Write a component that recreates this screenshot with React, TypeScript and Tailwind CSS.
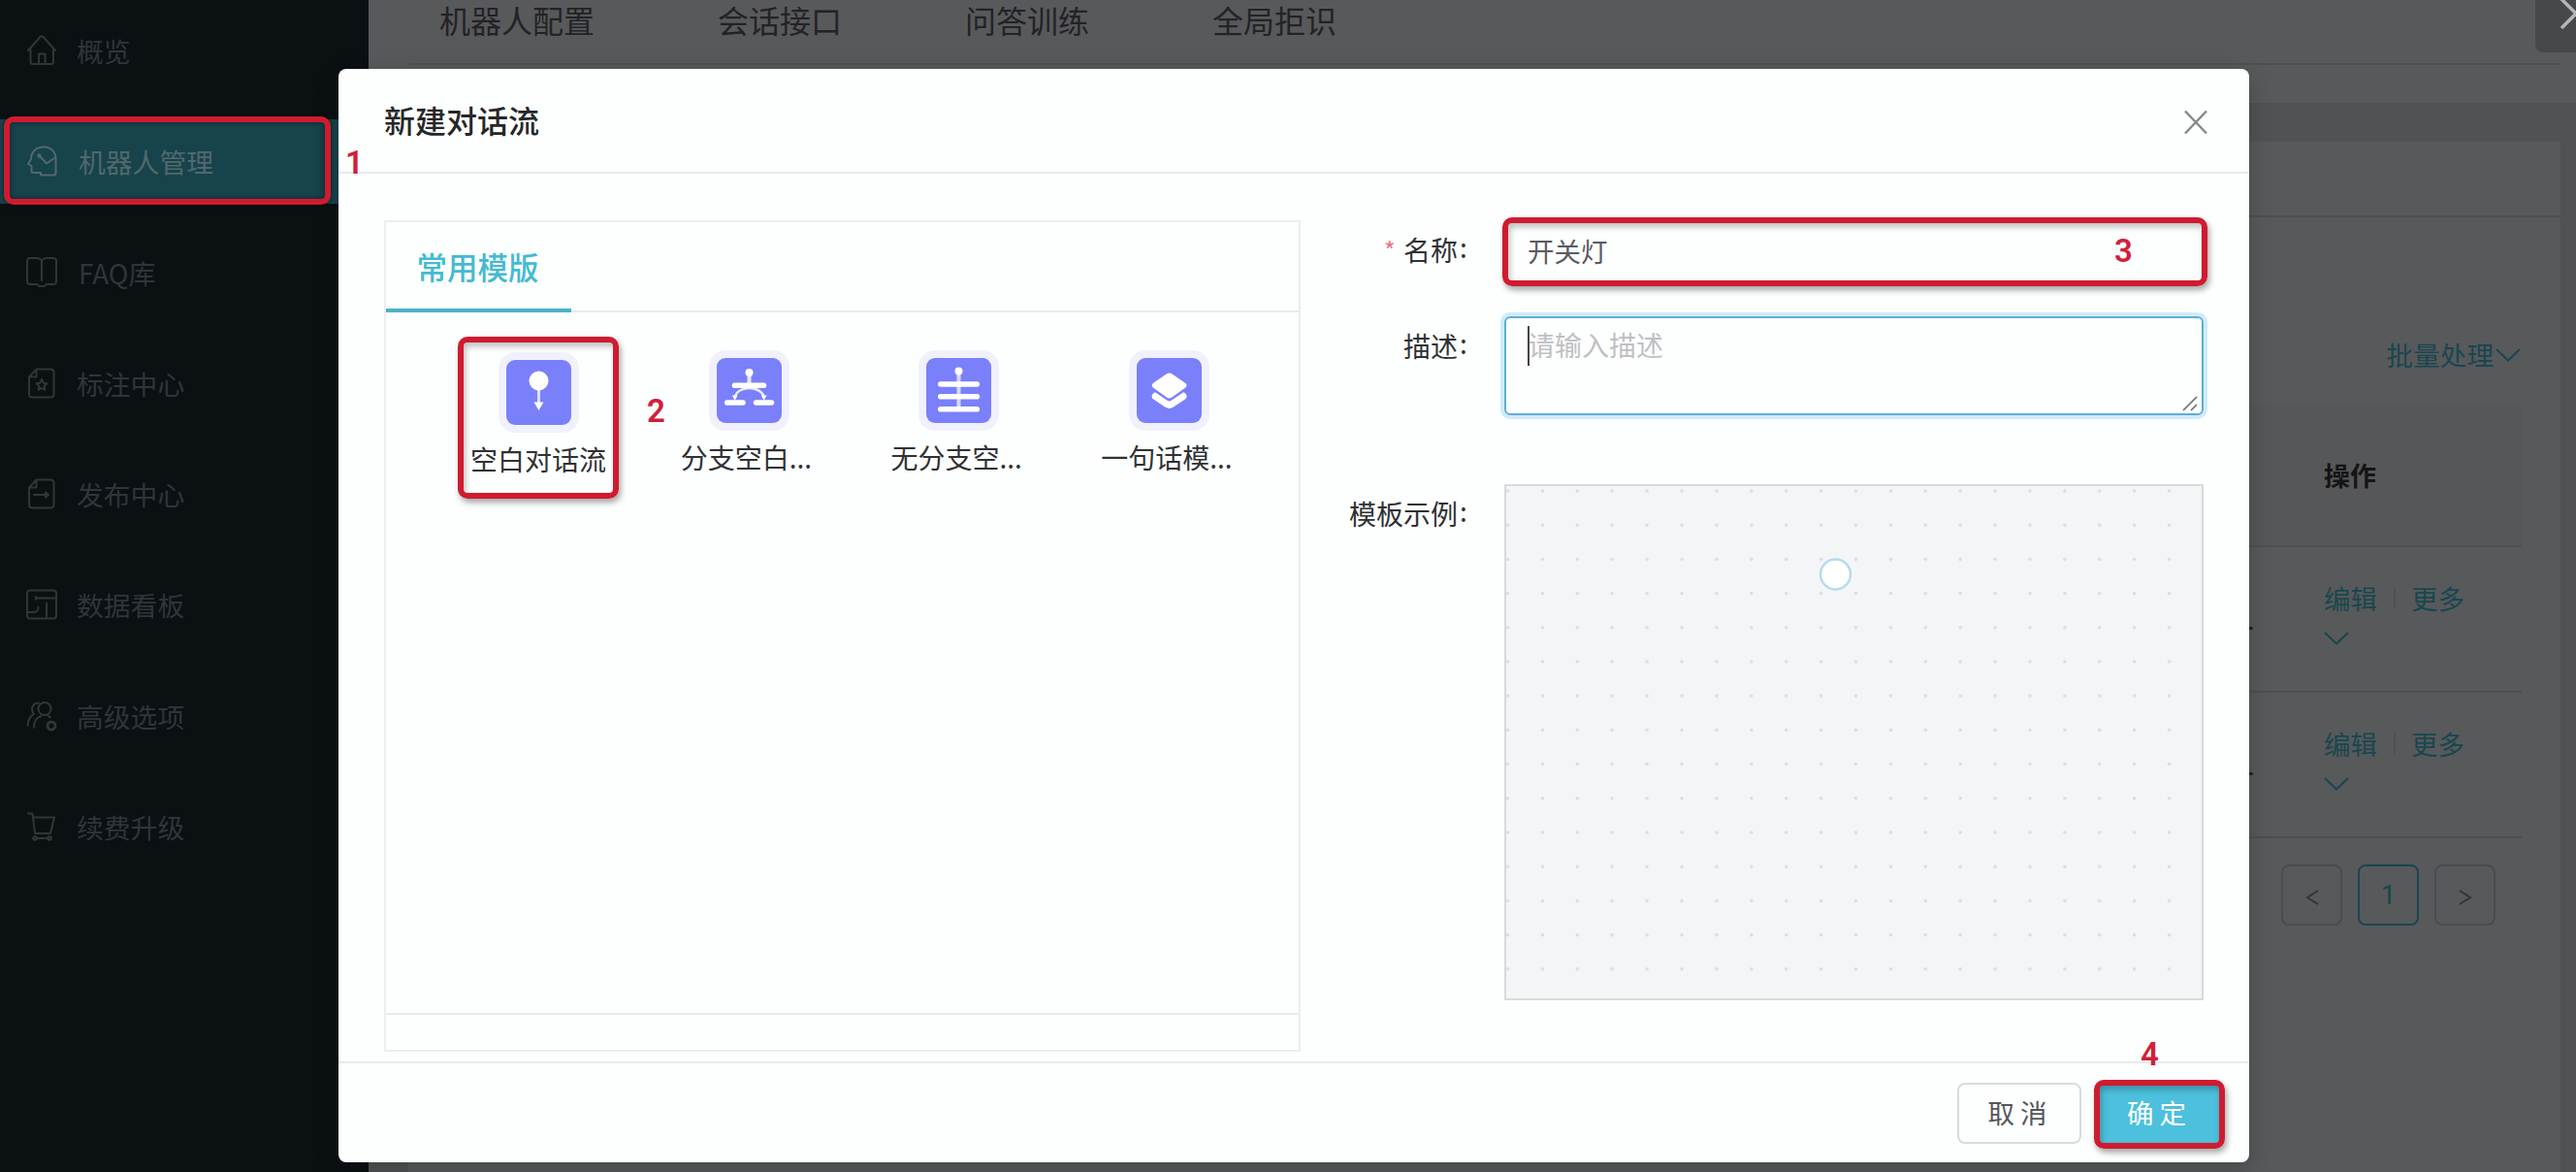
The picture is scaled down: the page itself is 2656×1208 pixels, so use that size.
import React from 'react';

interface NavItemProps {
  label: string;
  icon: React.ReactNode;
  active?: boolean;
  iconWidth?: string;
}

const navItems: NavItemProps[] = [
  {
    label: '概览',
    icon: (
      <>
        <path d="M2 16 L14.5 2 Q16 0.8 17.5 2 L30 16 M4.5 14 V28 Q4.5 30 6.5 30 H26 Q28 30 28 28 V14" />
        <path d="M13 29 V19.5 H19.5 V29" />
      </>
    ),
  },
  {
    label: '机器人管理',
    active: true,
    iconWidth: 'w-[34px]',
    icon: (
      <>
        <path d="M18 1.5 C10 1.5 5 7 5 14 L2 19 L5.5 21 V26.5 Q5.5 28 7.5 28 H15 V30.5 H28 Q30.5 30.5 30.5 28 V14 C30.5 7 26 1.5 18 1.5 Z" />
        <path d="M14 11 L21 18.5 L29 13" />
        <circle cx="13.5" cy="10.5" r="1.2" />
      </>
    ),
  },
  {
    label: 'FAQ库',
    iconWidth: 'w-[34px]',
    icon: (
      <>
        <path d="M16 3.5 Q14 1 11 1 H4 Q1 1 1 4 V25 Q1 28 4 28 H11 L13.5 30 H18.5 L21 28 H28 Q31 28 31 25 V4 Q31 1 28 1 H21 Q18 1 16 3.5 Z" />
        <path d="M16 4 V24" />
      </>
    ),
  },
  {
    label: '标注中心',
    icon: (
      <>
        <path d="M10.5 1.5 H25 Q28.5 1.5 28.5 5 V27 Q28.5 30.5 25 30.5 H6.5 Q3 30.5 3 27 V9.5 Z M10.5 2 V9.5 H3.5" />
        <path d="M16 12 L17.7 15.7 L21.5 16.2 L18.7 18.9 L19.4 22.8 L16 20.9 L12.6 22.8 L13.3 18.9 L10.5 16.2 L14.3 15.7 Z" />
      </>
    ),
  },
  {
    label: '发布中心',
    icon: (
      <>
        <path d="M10.5 1.5 H25 Q28.5 1.5 28.5 5 V27 Q28.5 30.5 25 30.5 H6.5 Q3 30.5 3 27 V9.5 Z M10.5 2 V9.5 H3.5" />
        <path d="M8 17 H22" />
        <path d="M20 14.5 L23 17 L20 19.5 Z" />
      </>
    ),
  },
  {
    label: '数据看板',
    icon: (
      <>
        <rect x="1" y="1.5" width="30" height="29" rx="3" />
        <path d="M31 9.5 H11.5 M10 8 V11 M1.5 24 H8 Q12.5 24 12.5 18.5 M21 30 V14.5" />
      </>
    ),
  },
  {
    label: '高级选项',
    icon: (
      <>
        <circle cx="19" cy="8.5" r="6.5" />
        <path d="M13 2.5 Q6.5 2.5 6 9 Q6 12 8 14 Q2 17 1.5 26 M8 28 Q8 18 15.5 16 M22.5 15.5 L25 17.5" />
        <circle cx="26" cy="26" r="4" strokeWidth="3" />
      </>
    ),
  },
  {
    label: '续费升级',
    icon: (
      <>
        <path d="M2 2.5 H6.5 L9 23 H25 L29 6.5 H8" />
        <circle cx="9" cy="28" r="1.8" />
        <circle cx="24" cy="28" r="1.8" />
        <path d="M10 28 H23" />
      </>
    ),
  },
];

const tabs = ['机器人配置', '会话接口', '问答训练', '全局拒识'];

const templates: { label: string; selected?: boolean; icon: React.ReactNode }[] = [
  {
    label: '空白对话流',
    selected: true,
    icon: (
      <>
        <circle cx="33.5" cy="21.5" r="10" fill="white" />
        <path d="M33.5 30 V46" stroke="white" strokeOpacity="0.75" strokeWidth="3" />
        <path d="M28.5 43.5 H38.5 L33.5 52 Z" fill="white" />
      </>
    ),
  },
  {
    label: '分支空白...',
    icon: (
      <>
        <circle cx="33.5" cy="15" r="4" fill="white" />
        <path d="M33.5 18 V27" stroke="white" strokeOpacity="0.8" strokeWidth="4" />
        <path d="M18.5 28.3 H48.5 M10.7 46 H27 M40.5 46 H56.5" stroke="white" strokeWidth="5.6" strokeLinecap="round" />
        <path d="M18.7 42 C18.7 35 26 31 33.5 31 C41 31 48.7 35 48.7 42" fill="none" stroke="white" strokeOpacity="0.85" strokeWidth="2.4" />
        <path d="M15.8 38.5 H21.6 L18.7 43.5 Z M45.8 38.5 H51.6 L48.7 43.5 Z" fill="white" />
      </>
    ),
  },
  {
    label: '无分支空...',
    icon: (
      <>
        <circle cx="33.5" cy="13.5" r="4" fill="white" />
        <path d="M33.5 17 V51" stroke="white" strokeOpacity="0.7" strokeWidth="4" />
        <path d="M14.8 27 H52.3 M14.8 39.8 H52.3 M14.8 52.7 H52.3" stroke="white" strokeWidth="5.6" strokeLinecap="round" />
      </>
    ),
  },
  {
    label: '一句话模...',
    icon: (
      <>
        <path d="M31 16.3 Q33.6 14.8 36.2 16.3 L50 25.8 Q53 28.3 50 30.8 L36 40.8 Q33.6 42.3 31.2 40.8 L17.2 30.8 Q14.2 28.3 17.2 25.8 Z" fill="white" />
        <path d="M19 35.3 L31.5 43.8 Q33.6 45 35.7 43.8 L48.2 35.3 Q53 37.5 51 41.8 L38 50.5 Q33.6 53.3 29.2 50.5 L16.2 41.8 Q14.2 37.5 19 35.3 Z" fill="white" />
      </>
    ),
  },
];

const NavItem: React.FC<NavItemProps> = ({ label, icon, active, iconWidth }) => (
  <div
    className={`flex h-[87px] shrink-0 items-center gap-5 pl-[27px] text-[27.8px] ${
      active ? 'bg-[#17434b] text-[#51696d]' : 'text-[#303538]'
    }`}
  >
    <div className={iconWidth ?? 'w-8'}>
      <svg
        viewBox="0 0 32 32"
        className="h-8 w-8"
        fill="none"
        stroke="currentColor"
        strokeWidth="2"
        strokeLinejoin="round"
        strokeLinecap="round"
      >
        {icon}
      </svg>
    </div>
    <span className="leading-9">{label}</span>
  </div>
);

const Chevron: React.FC<{ className?: string }> = ({ className }) => (
  <svg viewBox="0 0 26 14" className={`h-3.5 w-[26px] ${className ?? ''}`} fill="none" stroke="currentColor" strokeWidth="2">
    <path d="M1 1 L13 12.5 L25 1" />
  </svg>
);

const TableRow: React.FC = () => (
  <div className="flex h-[150px] items-start justify-between border-b-2 border-[#4e4f51] pt-[33px] text-[#18474f]">
    <span className="ml-[1857px] mt-[49px] h-[3px] w-[5px] rounded-sm bg-[#222]" />
    <div className="w-[204px] text-[27.5px]">
      <div className="flex items-center leading-[38px]">
        <span>编辑</span>
        <span className="ml-[17px] mr-4 h-[22px] w-0.5 bg-[#4e4f51]" />
        <span>更多</span>
      </div>
      <Chevron className="mt-4" />
    </div>
  </div>
);

const PageArrow: React.FC<{ d: string }> = ({ d }) => (
  <div className="flex h-[63px] w-[63px] items-center justify-center rounded-lg border-2 border-[#4b4c4e]">
    <svg viewBox="0 0 14 20" className="mt-1 h-5 w-3.5" fill="none" stroke="#333436" strokeWidth="2">
      <path d={d} />
    </svg>
  </div>
);

const Colon: React.FC = () => <span className="relative -top-[3px] inline-block w-2 pl-0.5">:</span>;

const redFrame = 'absolute rounded-[10px] border-[6.5px] border-[#cf1b30]';
const redNumber = "absolute font-['Roboto',sans-serif] text-[33px] font-semibold leading-8 text-[#d0203a]";

export default function App() {
  return (
    <div className="relative h-[1208px] w-[2656px] overflow-hidden bg-[#515254] font-['Noto_Sans_CJK_SC',sans-serif]">
      <div className="flex h-full">
        <nav className="flex w-[380px] shrink-0 flex-col gap-[27.3px] bg-[#0b1013] pt-[8.5px]">
          {navItems.map((item) => (
            <NavItem key={item.label} {...item} />
          ))}
        </nav>

        <main className="flex grow flex-col">
          <div className="h-[106px] shrink-0 bg-[#58595b] pl-[41px] pr-[15px]">
            <div className="flex h-[67px] gap-[127px] border-b-2 border-[#4e4f51] pl-8 text-[32px] leading-[41px] text-[#222325]">
              {tabs.map((tab) => (
                <span key={tab}>{tab}</span>
              ))}
            </div>
          </div>

          <div className="ml-[41px] mr-4 mt-10 grow bg-[#58595b]">
            <div className="h-[78px] border-b-2 border-[#4e4f51]" />
            <div className="px-10">
              <div className="flex h-[191px] items-center justify-end pb-[5px] pt-[97px] text-[27.6px] text-[#18474f]">
                <span>批量处理</span>
                <Chevron className="ml-0.5 mr-px" />
              </div>
              <div className="flex h-[149px] items-center justify-end border-b-2 border-[#4e4f51] bg-[#565759] pt-[3px] text-[27px] font-bold text-[#141516]">
                <span className="w-[204px]">操作</span>
              </div>
              <TableRow />
              <TableRow />
              <div className="mt-[27px] flex justify-end gap-4 pr-[27px]">
                <PageArrow d="M13 3 L2 10 L13 17" />
                <div className="flex h-[63px] w-[63px] items-center justify-center rounded-lg border-2 border-[#18474f] font-['Roboto',sans-serif] text-[28px] text-[#18474f]">
                  1
                </div>
                <PageArrow d="M1 3 L12 10 L1 17" />
              </div>
            </div>
          </div>
        </main>
      </div>

      {/* corner close button */}
      <div className="absolute right-0 top-0 h-[54px] w-[42px] overflow-hidden rounded-bl-lg bg-[#474849]">
        <svg viewBox="0 0 42 54" className="h-full w-full" fill="none" stroke="#b4b5b6" strokeWidth="3.5">
          <path d="M27 -1 L57 29 M27 29 L57 -1" />
        </svg>
      </div>

      {/* dialog */}
      <div className="absolute left-[349px] top-[71px] flex h-[1127px] w-[1970px] flex-col rounded-[8px] bg-[#fdfefe] shadow-[0_8px_24px_rgba(0,0,0,0.2)]">
        <div className="flex h-[108px] shrink-0 items-center justify-between border-b-2 border-[#e9eaee] pl-[47px] pr-[43px]">
          <h2 className="-mt-[3px] text-[32px] font-medium leading-10 text-[#262729]">新建对话流</h2>
          <svg viewBox="0 0 24 26" className="mt-1 h-[26px] w-6" fill="none" stroke="#87888b" strokeWidth="2.5">
            <path d="M1 1.5 L23 24.5 M23 1.5 L1 24.5" />
          </svg>
        </div>

        <div className="flex grow items-start pl-[47px] pr-[47px] pt-12">
          <div className="flex h-[857px] w-[945px] flex-col border-2 border-[#ecedf1]">
            <div className="flex h-[93px] shrink-0 border-b-2 border-[#e9eaee]">
              <div className="-mb-0.5 flex w-[191px] items-center justify-center border-b-4 border-[#4ab3c8] pt-0.5 pr-0.5 text-[31.5px] font-medium text-[#43bad3]">
                常用模版
              </div>
            </div>
            <div className="flex grow pl-[49px] pt-[47px]">
              {templates.map((t) => (
                <div key={t.label} className={`flex w-[216.8px] flex-col items-center ${t.selected ? 'pt-0.5' : ''}`}>
                  <div className="flex h-[67px] w-[67px] rounded-[9px] bg-[#7a80fa] shadow-[0_0_0_8px_#f1f1fd]">
                    <svg viewBox="0 0 67 67" className="h-full w-full">
                      {t.icon}
                    </svg>
                  </div>
                  <span className="mt-[15px] w-[141px] whitespace-nowrap text-[28px] leading-10 text-[#303133]">{t.label}</span>
                </div>
              ))}
            </div>
            <div className="h-[38px] shrink-0 border-t-2 border-[#e9eaee]" />
          </div>

          <div className="grid grow grid-cols-[131px_721px] justify-end text-[28px] leading-10 text-[#303133]">
            <div className="flex h-[99px] whitespace-nowrap pt-[10px]">
              <span className="ml-[7px] w-5 text-[25px] text-[#ea7484]">*</span>
              <span>
                名称
                <Colon />
              </span>
            </div>
            <div className="h-[99px]">
              <div className="h-[62px] rounded-md pl-6 pt-[11px] text-[27.5px] text-[#5a5b5e]">开关灯</div>
            </div>

            <div className="pl-[27px] pt-[10px]">
              描述
              <Colon />
            </div>
            <div className="relative h-[102px] rounded-md border-2 border-[#5cafd6] pl-[22px] pt-[7px] text-[28px] text-[#bfc0c4] shadow-[0_0_0_4px_#d0ebfb]">
              <span className="absolute left-[22px] top-2 h-[41px] w-0.5 bg-[#444]" />
              请输入描述
              <svg viewBox="0 0 16 16" className="absolute bottom-0.5 right-1 h-4 w-4" stroke="#6b6c6e" strokeWidth="1.6">
                <path d="M1 15 L15 1 M9 15 L15 9" />
              </svg>
            </div>

            <div className="-ml-[29px] whitespace-nowrap pt-[81px]">
              模板示例
              <Colon />
            </div>
            <div className="mt-[71px] h-[532px] border-2 border-[#d8dadc] bg-[#f4f5f7]">
              <svg className="h-full w-full">
                <defs>
                  <pattern id="dots" x="-1" y="2.5" width="35.9" height="35.2" patternUnits="userSpaceOnUse">
                    <circle cx="2.5" cy="2.5" r="1.8" fill="#dcdee1" />
                  </pattern>
                </defs>
                <rect width="710" height="500" fill="url(#dots)" />
                <circle cx="339.5" cy="91" r="15.5" fill="white" stroke="#b5dbee" strokeWidth="2.5" />
              </svg>
            </div>
          </div>
        </div>

        <div className="flex h-[104px] shrink-0 items-start justify-end gap-4 border-t-2 border-[#e9eaee] pr-[28px] pt-5 text-[27.5px] [word-spacing:4px]">
          <button className="h-[63px] w-32 rounded-lg border-2 border-[#d9dadf] pb-0.5 pr-1 text-[#55565a]">取 消</button>
          <button className="h-[63px] w-[129px] rounded-lg bg-[#4cc0dc] pb-0.5 pr-1.5 text-white">确 定</button>
        </div>
      </div>

      {/* step marks */}
      <div className={`${redFrame} left-1 top-[120px] h-[91px] w-[337px] shadow-[0_0_4px_rgba(0,0,0,0.6),inset_0_0_5px_rgba(0,0,0,0.5)]`} />
      <div className={`${redFrame} left-[472px] top-[347px] h-[167px] w-[166px] shadow-[2px_4px_6px_rgba(0,0,0,0.35),inset_2px_4px_6px_rgba(0,0,0,0.25)]`} />
      <div className={`${redFrame} left-[1549px] top-[224px] h-[71px] w-[727px] shadow-[2px_4px_6px_rgba(0,0,0,0.35),inset_2px_4px_6px_rgba(0,0,0,0.25)]`} />
      <div className={`${redFrame} left-[2159px] top-[1113px] h-[71px] w-[135px] shadow-[2px_4px_6px_rgba(0,0,0,0.35),inset_2px_4px_6px_rgba(0,0,0,0.25)]`} />
      <span className={`${redNumber} left-[356px] top-[152px]`}>1</span>
      <span className={`${redNumber} left-[667px] top-[408px]`}>2</span>
      <span className={`${redNumber} left-[2180px] top-[243px]`}>3</span>
      <span className={`${redNumber} left-[2207px] top-[1071px]`}>4</span>
    </div>
  );
}
